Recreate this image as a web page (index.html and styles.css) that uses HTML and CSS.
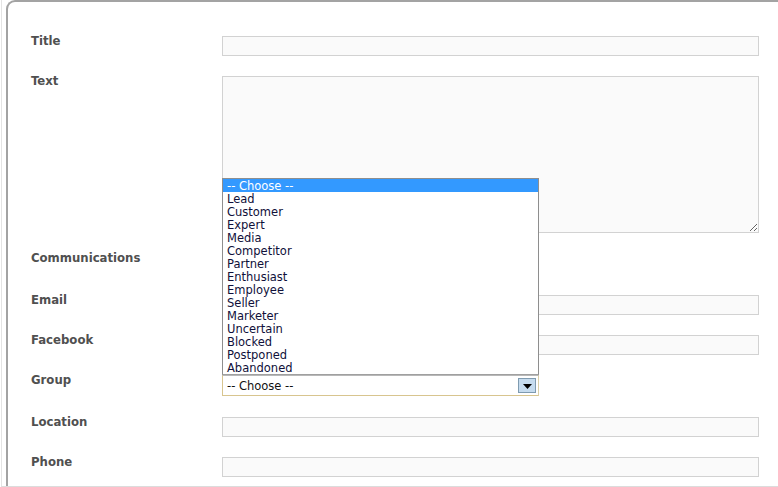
FILE: index.html
```html
<!DOCTYPE html>
<html>
<head>
<meta charset="utf-8">
<link rel="stylesheet" href="styles.css">
</head>
<body>
<div class="page">
  <div class="panel">
    <form class="form">
      <div class="row">
        <label class="lbl">Title</label>
        <div class="field"><input class="inp" type="text"></div>
      </div>
      <div class="row">
        <label class="lbl">Text</label>
        <div class="field"><textarea class="area"></textarea></div>
      </div>
      <div class="row row-comm">
        <label class="lbl">Communications</label>
        <div class="field"></div>
      </div>
      <div class="row">
        <label class="lbl">Email</label>
        <div class="field"><input class="inp" type="text"></div>
      </div>
      <div class="row">
        <label class="lbl">Facebook</label>
        <div class="field"><input class="inp" type="text"></div>
      </div>
      <div class="row row-group">
        <label class="lbl">Group</label>
        <div class="field">
          <div class="select-wrap">
            <ul class="options">
              <li class="opt sel">-- Choose --</li>
              <li class="opt">Lead</li>
              <li class="opt">Customer</li>
              <li class="opt">Expert</li>
              <li class="opt">Media</li>
              <li class="opt">Competitor</li>
              <li class="opt">Partner</li>
              <li class="opt">Enthusiast</li>
              <li class="opt">Employee</li>
              <li class="opt">Seller</li>
              <li class="opt">Marketer</li>
              <li class="opt">Uncertain</li>
              <li class="opt">Blocked</li>
              <li class="opt">Postponed</li>
              <li class="opt">Abandoned</li>
            </ul>
            <div class="select">
              <span class="select-text">-- Choose --</span>
              <span class="arrow"><svg width="9" height="5" viewBox="0 0 9 5"><path d="M0 0h9L4.5 5z" fill="#000"/></svg></span>
            </div>
          </div>
        </div>
      </div>
      <div class="row">
        <label class="lbl">Location</label>
        <div class="field"><input class="inp" type="text"></div>
      </div>
      <div class="row">
        <label class="lbl">Phone</label>
        <div class="field"><input class="inp" type="text"></div>
      </div>
    </form>
  </div>
</div>
</body>
</html>
```
FILE: styles.css
```css
html, body {
  margin: 0;
  padding: 0;
  background: #fff;
  overflow: hidden;
  height: 487px;
}
.page {
  height: 487px;
  padding-left: 2px;
  border-left: 1px solid #e4e4e4;
  margin-left: 1px;
  box-sizing: border-box;
  border-bottom: 1px solid #dcdcdc;
}
.panel {
  margin-left: 2px;
  height: 486px;
  box-sizing: border-box;
  border-top: 2px solid #a3a3a3;
  border-left: 2px solid #a3a3a3;
  border-top-left-radius: 9px;
  background: #fff;
}
.form {
  margin: 0;
  padding: 34px 0 0 23px;
  font-family: "DejaVu Sans", Verdana, sans-serif;
}
.row {
  display: grid;
  grid-template-columns: 191px 537px;
  margin-bottom: 20px;
}
.lbl {
  font-family: "DejaVu Sans Condensed", "DejaVu Sans", sans-serif;
  font-size: 13px;
  font-weight: bold;
  color: #505050;
  line-height: 14px;
  margin-top: -2px;
}
.field {
  display: flex;
  flex-direction: column;
}
.inp {
  margin: 0;
  box-sizing: border-box;
  width: 537px;
  height: 20px;
  border: 1px solid #d2d2d2;
  background: #fafafa;
  padding: 0 4px;
  outline: none;
}
.area {
  margin: 0;
  box-sizing: border-box;
  width: 537px;
  height: 157px;
  border: 1px solid #d2d2d2;
  background: #fafafa;
  padding: 2px 4px;
  display: block;
  outline: none;
}
.row-comm {
  height: 20px;
  margin-bottom: 22px;
}
.row-group {
  margin-bottom: 21px;
}
.select-wrap {
  position: relative;
  width: 317px;
}
.select {
  box-sizing: border-box;
  width: 317px;
  height: 21px;
  border: 1px solid #d8c58f;
  border-top-color: #b8b8b8;
  border-right-color: #d9cfa8;
  background: #fff;
  display: flex;
  align-items: center;
  justify-content: space-between;
  padding: 0 2px 0 4px;
  font-size: 11.5px;
  color: #111;
}
.select-text {
  line-height: 14px;
}
.arrow {
  box-sizing: border-box;
  width: 18px;
  height: 15px;
  border: 1px solid #7f9bb0;
  background: #c6dcef;
  display: flex;
  align-items: center;
  justify-content: center;
  padding-top: 2px;
}
.options {
  position: absolute;
  left: 0;
  bottom: 21px;
  width: 317px;
  box-sizing: border-box;
  margin: 0;
  padding: 0;
  list-style: none;
  border: 1px solid #8e8e8e;
  border-bottom: 1px solid #a0a0a0;
  background: #fff;
  font-size: 11.5px;
}
.opt {
  height: 13px;
  line-height: 15px;
  padding-left: 4px;
  color: #10103a;
  overflow: visible;
}
.opt.sel {
  background: #3399ff;
  color: #fff;
}
```
